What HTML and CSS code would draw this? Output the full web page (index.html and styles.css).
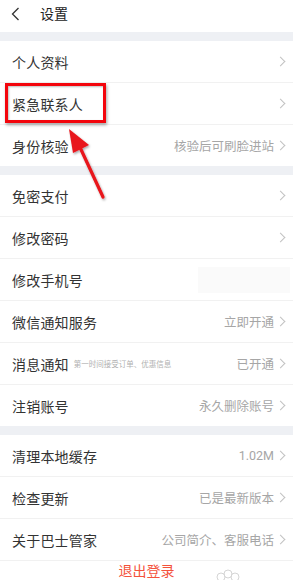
FILE: index.html
```html
<!DOCTYPE html>
<html lang="zh-CN">
<head>
<meta charset="utf-8">
<link rel="stylesheet" href="styles.css">
</head>
<body>
<div class="page">
  <header class="topbar">
    <svg class="back" width="9" height="14" viewBox="0 0 9 14"><path d="M7.5 1 L1.5 7 L7.5 13" fill="none" stroke="#333" stroke-width="1.3"/></svg>
    <span class="title">设置</span>
  </header>
  <div class="band"></div>
  <section class="group">
    <div class="row"><span class="label">个人资料</span><span class="right"><i class="chev"></i></span></div>
    <div class="row"><span class="label">紧急联系人</span><span class="right"><i class="chev"></i></span></div>
    <div class="row"><span class="label">身份核验</span><span class="right"><span class="val">核验后可刷脸进站</span><i class="chev"></i></span></div>
  </section>
  <div class="band"></div>
  <section class="group">
    <div class="row"><span class="label">免密支付</span><span class="right"><i class="chev"></i></span></div>
    <div class="row"><span class="label">修改密码</span><span class="right"><i class="chev"></i></span></div>
    <div class="row"><span class="label">修改手机号</span><span class="right"><span class="blur"></span></span></div>
    <div class="row"><span class="label">微信通知服务</span><span class="right"><span class="val">立即开通</span><i class="chev"></i></span></div>
    <div class="row"><span class="label">消息通知<span class="hint">第一时间接受订单、优惠信息</span></span><span class="right"><span class="val">已开通</span><i class="chev"></i></span></div>
    <div class="row"><span class="label">注销账号</span><span class="right"><span class="val">永久删除账号</span><i class="chev"></i></span></div>
  </section>
  <div class="band"></div>
  <section class="group">
    <div class="row"><span class="label">清理本地缓存</span><span class="right"><span class="val num">1.02M</span><i class="chev"></i></span></div>
    <div class="row"><span class="label">检查更新</span><span class="right"><span class="val">已是最新版本</span><i class="chev"></i></span></div>
    <div class="row last"><span class="label">关于巴士管家</span><span class="right"><span class="val">公司简介、客服电话</span><i class="chev"></i></span></div>
  </section>
  <div class="logout">退出登录</div>

  <div class="highlight"></div>
  <svg class="arrow" width="60" height="90" viewBox="0 0 60 90">
    <defs>
      <filter id="sh" x="-30%" y="-30%" width="160%" height="160%">
        <feDropShadow dx="1" dy="1.5" stdDeviation="1.2" flood-color="#000" flood-opacity="0.35"/>
      </filter>
    </defs>
    <g filter="url(#sh)">
      <line x1="18" y1="22" x2="43" y2="76" stroke="#e8141a" stroke-width="3.2" stroke-linecap="round"/>
      <polygon points="9,8 13,32 29,24" fill="#e8141a"/>
    </g>
  </svg>
  <svg class="mark" width="30" height="14" viewBox="0 0 30 14">
    <g fill="none" stroke="#d5d5d5" stroke-width="1">
      <circle cx="8" cy="8" r="4"/>
      <circle cx="15" cy="5" r="4"/>
      <circle cx="22" cy="8" r="4"/>
    </g>
  </svg>
</div>
</body>
</html>
```
FILE: styles.css
```css
* { box-sizing: border-box; margin: 0; padding: 0; }
html, body { background: #fff; }
body {
  font-family: "Noto Sans CJK SC", "Noto Sans", sans-serif;
  color: #333;
}
.page {
  position: relative;
  width: 293px;
  height: 580px;
  overflow: hidden;
}
.topbar {
  height: 32px;
  display: flex;
  align-items: center;
  padding-left: 11px;
}
.back { display: block; margin-top: -4px; }
.title {
  margin-left: 20px;
  font-size: 14px;
  line-height: 16px;
  margin-top: -6px;
  color: #222;
}
.band {
  height: 9px;
  background: #eef0f4;
}
.group { display: flex; flex-direction: column; }
.row {
  height: 42px;
  border-bottom: 1px solid #f1f1f1;
  display: flex;
  align-items: center;
  justify-content: space-between;
  padding: 0 6px 0 12px;
}
.group .row:last-child { border-bottom: none; height: 41px; }
.group .row.last { border-bottom: 1px solid #f1f1f1; height: 42px; }
.label {
  font-size: 14px;
  color: #333;
  display: flex;
  align-items: center;
  letter-spacing: 0.2px;
}
.hint {
  font-size: 7.5px;
  color: #b0b0b0;
  margin-left: 5px;
  letter-spacing: 0;
}
.right {
  display: flex;
  align-items: center;
  gap: 3px;
}
.val {
  font-size: 12.5px;
  color: #a6a6a6;
}
.val.num { font-family: Roboto, "Noto Sans", sans-serif; }
.chev {
  display: block;
  width: 7px;
  height: 7px;
  border-top: 1px solid #c2c2c2;
  border-right: 1px solid #c2c2c2;
  transform: rotate(45deg);
  margin-right: 3px;
}
.blur {
  display: block;
  width: 92px;
  height: 26px;
  margin-right: -3px;
  background: #fafafa;
}
.logout {
  text-align: center;
  font-size: 14px;
  line-height: 15px;
  color: #f4523b;
  padding-top: 2px;
}
.highlight {
  position: absolute;
  left: 5px;
  top: 83px;
  width: 101px;
  height: 40px;
  border: 3px solid #f3050c;
  box-shadow: 1px 2px 3px rgba(0,0,0,0.35), inset 1px 1px 2px rgba(0,0,0,0.25);
}
.arrow {
  position: absolute;
  left: 60px;
  top: 121px;
}
.mark {
  position: absolute;
  left: 213px;
  top: 569px;
}
```
